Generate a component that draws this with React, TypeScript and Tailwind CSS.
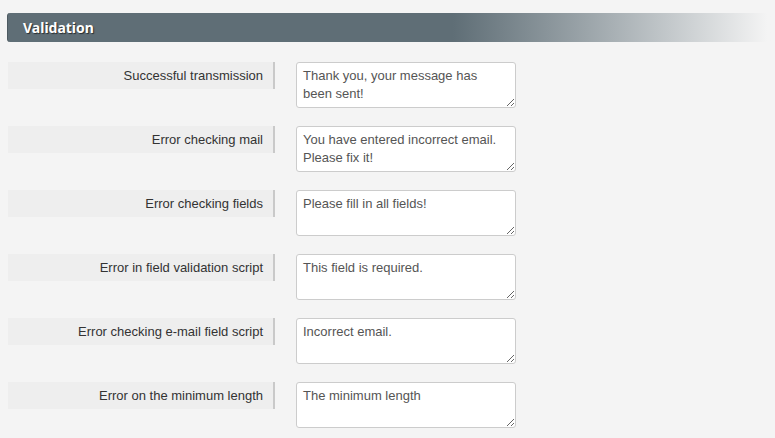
const rows = [
  { label: "Successful transmission", value: "Thank you, your message has been sent!" },
  { label: "Error checking mail", value: "You have entered incorrect email. Please fix it!" },
  { label: "Error checking fields", value: "Please fill in all fields!" },
  { label: "Error in field validation script", value: "This field is required." },
  { label: "Error checking e-mail field script", value: "Incorrect email." },
  { label: "Error on the minimum length", value: "The minimum length" },
];

export default function App() {
  return (
    <div className="min-h-[438px] w-[775px] overflow-hidden bg-[#f4f4f4] pl-[7px] pt-[13px] font-['Liberation_Sans',Arial,sans-serif]">
      {/* Header */}
      <div className="flex h-[29px] items-center rounded-l-[3px] border-l border-[#4d5a61] bg-gradient-to-r from-[#5f6e76] from-58% to-[#f4f4f4] to-99% pl-[15px]">
        <span className="font-['Noto_Sans',sans-serif] text-[14px] font-bold text-white [text-shadow:1px_1px_1px_rgba(0,0,0,0.6)]">
          Validation
        </span>
      </div>

      {/* Rows */}
      <div className="mt-[20px] flex flex-col gap-[18px]">
        {rows.map((row) => (
          <div key={row.label} className="flex items-start">
            <div className="ml-px flex h-[27px] w-[267px] items-center justify-end border-r-2 border-[#c9c9c9] bg-[#eeeeee] pr-[10px] text-[13px] text-[#333333]">
              {row.label}
            </div>
            <textarea
              readOnly
              defaultValue={row.value}
              className="ml-[21px] h-[46px] w-[220px] overflow-hidden rounded-[3px] border border-[#cccccc] bg-white px-[6px] pt-[4px] pb-[2px] text-[13px] leading-[18px] text-[#555555] outline-none font-['Liberation_Sans',Arial,sans-serif]"
            />
          </div>
        ))}
      </div>
    </div>
  );
}
